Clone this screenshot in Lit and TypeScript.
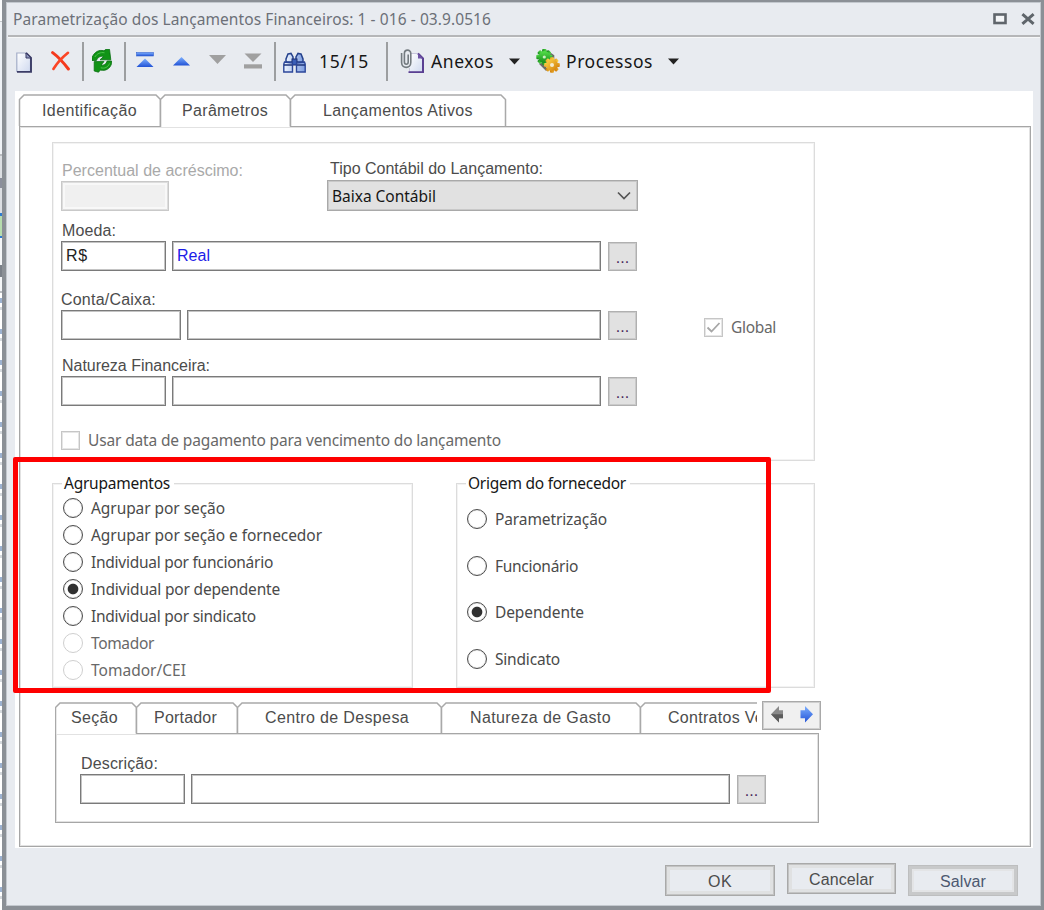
import { LitElement, html, css, svg, nothing } from "lit";
import { customElement, property, query, state } from "lit/decorators.js";
import { classMap } from "lit/directives/class-map.js";

interface Tab {
  text: string;
  textWidth: number;
  width: number;
  offset: number;
}

interface Option {
  text: string;
  width: number;
  disabled?: boolean;
}

@customElement("fit-text")
export class FitText extends LitElement {
  static styles = css`
    :host {
      display: inline-block;
      white-space: pre;
      flex: none;
    }
  `;

  @property() text = "";
  @property({ type: Number }) width = 0;
  @query("span") span!: HTMLSpanElement;

  updated() {
    this.span.style.letterSpacing = "0px";
    const natural = this.span.getBoundingClientRect().width;
    const step = (this.width - natural) / this.text.length;
    this.span.style.letterSpacing = `${step}px`;
  }

  render() {
    return html`<span>${this.text}</span>`;
  }
}

const t = (text: string, width: number) =>
  html`<fit-text .text=${text} .width=${width}></fit-text>`;

@customElement("tab-strip")
export class TabStrip extends LitElement {
  static styles = css`
    :host {
      display: flex;
      position: relative;
      z-index: 1;
    }
    .tab {
      position: relative;
      flex: none;
      box-sizing: border-box;
      height: 100%;
      display: flex;
      align-items: center;
      color: #4c4c4c;
    }
    .shape {
      position: absolute;
      left: 0;
      top: 0;
      overflow: visible;
    }
    .caption {
      position: relative;
      line-height: 20px;
    }
  `;

  @property({ attribute: false }) tabs: Tab[] = [];
  @property({ type: Number }) selected = 0;
  @property({ type: Number }) height = 33;

  shape(width: number, active: boolean) {
    const bottom = active ? this.height : this.height - 1;
    const d = `M.5 ${bottom}V5.5L5 1H${width - 4}L${width + 0.5} 5.5V${bottom}`;
    return html`<svg class="shape" width=${width} height=${this.height}>
      <path d=${d} fill="#fff" stroke="#a9a9a9" stroke-width="1.5" />
    </svg>`;
  }

  render() {
    return this.tabs.map(
      (tab, i) => html`
        <div
          class="tab"
          style="width:${tab.width}px;padding-left:${tab.offset}px"
          @click=${() => (this.selected = i)}
        >
          ${this.shape(tab.width, i === this.selected)}
          <span class="caption">${t(tab.text, tab.textWidth)}</span>
        </div>
      `
    );
  }
}

@customElement("radio-list")
export class RadioList extends LitElement {
  static styles = css`
    :host {
      display: flex;
      flex-direction: column;
      font: 15.5px "Noto Sans", "Open Sans", sans-serif;
      color: #4a4a4a;
    }
    .option {
      flex: 1;
      display: flex;
      align-items: center;
      gap: 8px;
      line-height: 20px;
    }
    .dot {
      box-sizing: border-box;
      width: 20px;
      height: 20px;
      border: 1.5px solid #4d4d4d;
      border-radius: 50%;
      background: #fff;
      box-shadow: inset 0 0 1px #888;
    }
    .dot.on {
      background: radial-gradient(circle, #303030 4.8px, #fff 5.8px);
    }
    .disabled {
      color: #686868;
    }
    .disabled .dot {
      border-color: #cfcfcf;
      box-shadow: none;
    }
  `;

  @property({ attribute: false }) options: Option[] = [];
  @property({ type: Number }) selected = -1;

  choose(i: number) {
    if (!this.options[i].disabled) {
      this.selected = i;
    }
  }

  render() {
    return this.options.map(
      (o, i) => html`
        <div
          class=${classMap({ option: true, disabled: !!o.disabled })}
          @click=${() => this.choose(i)}
        >
          <span class=${classMap({ dot: true, on: i === this.selected })}></span>
          ${t(o.text, o.width)}
        </div>
      `
    );
  }
}

const gradients = svg`
  <defs>
    <linearGradient id="blue" x1="0" y1="0" x2="0" y2="1">
      <stop offset="0" stop-color="#7db0ff" />
      <stop offset="1" stop-color="#2253d6" />
    </linearGradient>
    <linearGradient id="page" x1="0" y1="0" x2="1" y2="1">
      <stop offset="0" stop-color="#ffffff" />
      <stop offset="1" stop-color="#cfd9ef" />
    </linearGradient>
    <linearGradient id="lens" x1="0" y1="0" x2="1" y2="0">
      <stop offset="0" stop-color="#eef5ff" />
      <stop offset="1" stop-color="#7d9de0" />
    </linearGradient>
    <linearGradient id="leaf" x1="0" y1="0" x2="0" y2="1">
      <stop offset="0" stop-color="#55e04a" />
      <stop offset="1" stop-color="#178a1c" />
    </linearGradient>
    <linearGradient id="gold" x1="0" y1="0" x2="1" y2="1">
      <stop offset="0" stop-color="#ffd84a" />
      <stop offset="1" stop-color="#cf7a08" />
    </linearGradient>
  </defs>`;

const icon = (width: number, body: unknown, height = 24) =>
  html`<svg width=${width} height=${height} viewBox="0 0 ${width} ${height}">${gradients}${body}</svg>`;

const teeth = (cx: number, cy: number, r: number, size: number) =>
  [0, 45, 90, 135].map(
    (a) => svg`<rect x=${cx - r} y=${cy - size / 2} width=${r * 2} height=${size} rx="1"
      transform="rotate(${a} ${cx} ${cy})" />`
  );

const icons = {
  page: icon(17, svg`
    <path d="M.8 4H10.5L14.5 8.5V22.5H.8Z" fill="url(#page)" stroke="#a4adc8" stroke-width="1.2" />
    <path d="M10 4L15 9V22.9H1" fill="none" stroke="#3b3c66" stroke-width="1.9" />
    <path d="M10 4V9H15Z" fill="#8b93bb" stroke="#3b3c66" />`),
  remove: icon(19, svg`
    <path d="M1.6 3.6Q9 9 17.4 20" fill="none" stroke="#f43a1d" stroke-width="3" stroke-linecap="round" />
    <path d="M17 3.8Q8 11 2.4 20" fill="none" stroke="#fb4526" stroke-width="2.6" stroke-linecap="round" />`),
  refresh: icon(20, svg`
    <path d="M0 11.5V8.5C2.5 3 6.5.4 12 1.8L14 .3H17.5L18.8 10.8H8L11.6 7.6C8.5 6.8 6 8 4.4 11.5Z" fill="#119316" stroke="#087010" stroke-width=".8" />
    <path d="M19.6 12V14.5C18 19.8 13.5 22.4 8.4 21L6.5 23.2L2.2 22V12.6H12L9 16C12 16.6 14.2 15.3 15.2 12Z" fill="#119316" stroke="#087010" stroke-width=".8" />
    <path d="M2.8 8C5 4.6 8.5 3 12.5 3.8M17.5 14.5C16 18.4 12.5 19.8 8.8 18.8" fill="none" stroke="#4cc44a" />`),
  first: icon(18, svg`
    <rect x=".5" y="3.5" width="17" height="3.5" fill="url(#blue)" stroke="#3765cf" stroke-width=".6" />
    <path d="M9 9.5L17.5 18H.5Z" fill="url(#blue)" />`),
  up: icon(17, svg`<path d="M8.5 8L17 16.5H0Z" fill="url(#blue)" />`),
  down: icon(17, svg`<path d="M0 6H17L8.5 15Z" fill="#a0a0a0" />`),
  last: icon(18, svg`
    <path d="M.5 4.5H17.5L9 13Z" fill="#a0a0a0" />
    <rect y="15.3" width="18" height="4.2" fill="#a0a0a0" />`),
  find: icon(23, svg`
    <path d="M5 5L8 4.4L10 8V13H3V10ZM18 5L15 4.4L13 8V13H20V10Z" fill="url(#lens)" stroke="#24418c" stroke-width="1.5" />
    <rect x="9" y="10" width="5" height="6" fill="#3b5fb8" stroke="#1c2f72" />
    <path d="M1.5 13L9.5 14V23H.8V15ZM21.5 13L13.5 14V23H22.2V15Z" fill="url(#lens)" stroke="#2c479a" stroke-width="1.4" />
    <path d="M1 16H9M14 16H22" stroke="#1f3579" stroke-width="1.5" />`),
  attach: icon(25, svg`
    <path d="M10 4.5H18.5L23 9V23H9.5V19" fill="url(#page)" stroke="#c8c6dc" />
    <path d="M18 4.5L23 9.5V23.2H8.5" fill="none" stroke="#5a3f92" stroke-width="2" />
    <path d="M18 4.5V9.5H23Z" fill="#6d52a4" />
    <path d="M1.6 4V13.5C1.6 20 10.8 20 10.8 13.5V4.5C10.8 0 4.4 0 4.4 4.5V13C4.4 16 8.2 16 8.2 13V5.5" fill="none" stroke="#747b80" stroke-width="1.6" />`),
  gears: icon(25, svg`
    <path d="M10 2L17 7V12M4 14L11 21" fill="none" stroke="#6b6d66" stroke-width="2.6" />
    <g fill="url(#leaf)">${teeth(8.3, 8, 8, 4.4)}<circle cx="8.3" cy="8" r="6" /></g>
    <circle cx="8.3" cy="8" r="1.6" fill="#c9efbf" />
    <g fill="url(#gold)">${teeth(16, 16, 7.8, 4)}<circle cx="16" cy="16" r="6" /></g>
    <circle cx="16" cy="16" r="2" fill="#f4ecd0" />`),
  drop: icon(11, svg`<path d="M0 9.5H11L5.5 15.5Z" fill="#222" />`),
  restore: icon(14, svg`<rect x="1.5" y="1.5" width="11" height="8.5" fill="#f4f6f8" stroke="#5f656b" stroke-width="2.6" />`, 12),
  close: icon(14, svg`<path d="M1.4 1.2L12.6 10.8M12.6 1.2L1.4 10.8" stroke="#5f656b" stroke-width="3" />`, 12),
  chevron: icon(14, svg`<path d="M1 1.5L7 7.5L13 1.5" fill="none" stroke="#555" stroke-width="1.7" />`, 9),
  tick: icon(19, svg`<path d="M3.5 9.5L7.5 13.5L15.5 5" fill="none" stroke="#a6a6a6" stroke-width="1.8" />`, 19),
  prev: icon(13, svg`<path d="M0 8.2L8 0V4.2H12V12.2H8V16.5Z" fill="#8a8a8a" /><path d="M0 8.2H12V12.2H8V16.5Z" fill="#5c5c5c" />`, 17),
  next: icon(13, svg`<path d="M13 8.2L5 0V4.2H.5V12.2H5V16.5Z" fill="url(#blue)" />`, 17),
};

@customElement("app-root")
export class AppRoot extends LitElement {
  static styles = css`
    :host {
      display: block;
      position: relative;
      box-sizing: border-box;
      width: 1044px;
      height: 910px;
      padding-left: 2px;
      overflow: hidden;
      font: 16px "Liberation Sans", Arial, sans-serif;
      color: #4c4c4c;
      background:
        linear-gradient(#fafbfc 0 21px, #c4c7ca 21px 22px, #eff2f6 22px 154px, #b9bcc0 154px 156px, #dcdfe3 156px 178px, #8b8f9c 178px 188px, #dcdfe3 188px 213px, #2d7bd0 213px 216px, #b6dcae 216px 236px, #2d7bd0 236px 238px, #f4f6f8 238px 265px, #7a8088 265px 277px, #f4f6f8 277px 291px, #b9bcc0 291px 293px, transparent 293px) no-repeat,
        repeating-linear-gradient(#fff 0 19px, #9db2d0 19px 24px, #fff 24px 28px, #d5d9dd 28px 31px);
    }
    svg {
      display: block;
      flex: none;
    }
    .window {
      box-sizing: border-box;
      height: 910px;
      border: solid #8b9096;
      border-width: 2px 3px 4px 4px;
      background: #e8ebf0;
      box-shadow: inset 0 0 0 1px #c3c8ce;
    }
    .ui {
      font-family: "Noto Sans", "Open Sans", sans-serif;
    }
    .title {
      display: flex;
      align-items: center;
      height: 33px;
      margin: 0 1px 0 2px;
      padding: 0 5px;
      border-bottom: 2px solid #b5b6b8;
      box-shadow: 0 1px #f6f7f8;
      font-size: 15.5px;
      line-height: 20px;
      color: #6c7078;
    }
    .controls {
      display: flex;
      gap: 14px;
      margin-left: auto;
    }
    .toolbar {
      display: grid;
      grid-template-columns: 35px 31px 10px 32px 12px 37px 36px 35px 30px 9px 36px 67px 14px 31px 78px 27px 30px 102px 11px;
      align-items: center;
      height: 46px;
      margin-top: 1px;
      padding-left: 10px;
      font-size: 17.5px;
      line-height: 24px;
      color: #161616;
    }
    .separator {
      width: 1.5px;
      height: 39px;
      background: #9c9ea0;
    }
    .workspace {
      box-sizing: border-box;
      width: 1018px;
      height: 757px;
      margin: 7px 0 0 9px;
      padding: 3px 3px 3px 4px;
      background: #fff;
    }
    .main-tabs {
      height: 33px;
      margin-bottom: -1px;
    }
    .panel {
      box-sizing: border-box;
      border: 1px solid #a6a6a6;
      box-shadow: inset 0 0 0 1px #e2e2e2;
    }
    .main-panel {
      width: 1012px;
      height: 721px;
      padding: 15px 0 0 32px;
    }
    .group {
      box-sizing: border-box;
      border: 1px solid #dcdcdc;
      box-shadow: inset 0 0 0 1px #f3f3f3;
    }
    .details {
      width: 763px;
      height: 319px;
      padding: 17px 0 0 8px;
    }
    .caption {
      height: 21px;
      line-height: 22px;
      padding-left: 1px;
    }
    .cash .caption {
      padding-left: 0;
    }
    .caption.muted {
      color: #a9a9a9;
    }
    .top {
      display: grid;
      grid-template-columns: 266px 311px;
    }
    .type .caption {
      height: 20px;
      line-height: 18px;
      padding-left: 3px;
    }
    .line {
      display: flex;
      align-items: flex-end;
    }
    .box {
      box-sizing: border-box;
      height: 30px;
      margin-right: 6px;
      padding-left: 4px;
      border: 1px solid #7a7a7a;
      box-shadow: inset 0 0 0 1px #c4c4c4;
      background: #fff;
      line-height: 28px;
      color: #222;
    }
    .code {
      width: 105px;
    }
    .account {
      width: 120px;
    }
    .name {
      width: 429px;
      color: #1c1ce8;
    }
    .account + .name {
      width: 414px;
    }
    .description {
      width: 539px;
    }
    .box.locked {
      width: 108px;
      border-color: #c9c9c9;
      background: #f0f0f0;
      box-shadow: inset 0 0 0 1px #ddd, inset 0 0 0 3px #f8f8f8;
    }
    .select {
      display: flex;
      box-sizing: border-box;
      align-items: center;
      justify-content: space-between;
      height: 31px;
      padding: 0 6px 0 4px;
      border: 1px solid #a9a9a9;
      box-shadow: inset 0 0 0 1px #c8c8c8;
      background: #e1e1e1;
      font-size: 15.5px;
      line-height: 20px;
      color: #161616;
    }
    .more {
      box-sizing: border-box;
      width: 29px;
      height: 29px;
      margin-left: 1px;
      border: 1px solid #b0b0b0;
      box-shadow: inset 0 0 0 1px #cacaca;
      background: #e1e1e1;
      text-align: center;
      line-height: 30px;
      color: #4a2c5c;
    }
    .currency {
      margin-top: 9px;
    }
    .cash {
      margin-top: 18px;
    }
    .nature {
      margin-top: 15px;
    }
    .check {
      display: flex;
      align-items: center;
      gap: 8px;
      font-size: 15.5px;
      line-height: 20px;
      color: #686868;
    }
    .use-date {
      margin-top: 24px;
    }
    .global {
      margin: 0 0 3px 67px;
    }
    .tick {
      box-sizing: border-box;
      width: 19px;
      height: 19px;
      border: 1px solid #c6c6c6;
      box-shadow: inset 0 0 0 1px #e6e6e6;
    }
    .tick svg {
      margin: -1px;
    }
    .groups {
      display: grid;
      grid-template-columns: 361px 359px;
      gap: 43px;
      margin-top: 22px;
    }
    .groups .group {
      height: 205px;
      padding-left: 10px;
    }
    .legend {
      display: block;
      width: fit-content;
      height: 20px;
      margin: -11px 0 0 -1px;
      padding: 0 4px 0 2px;
      background: #fff;
      font-size: 15.5px;
      line-height: 20px;
      color: #161616;
    }
    .grouping {
      height: 189px;
      margin-top: 1px;
    }
    .origin {
      height: 186px;
      margin-top: 3px;
    }
    .sub {
      display: flex;
      align-items: flex-start;
      gap: 5px;
      margin: 13px 0 -1px 3px;
    }
    .sub-tabs {
      width: 702px;
      height: 32px;
      margin-top: 1px;
      overflow: hidden;
    }
    .scroller {
      display: flex;
      box-sizing: border-box;
      width: 59px;
      height: 29px;
      padding: 4px 7px 0 8px;
      justify-content: space-between;
      border: 1px solid #a9a9a9;
      box-shadow: inset 0 0 0 1px #cfcfcf;
      background: #f0f0f0;
    }
    .sub-panel {
      width: 764px;
      height: 90px;
      margin-left: 3px;
      padding: 19px 0 0 24px;
    }
    .footer {
      display: flex;
      align-items: flex-start;
      gap: 12px;
      margin: 15px 0 0 659px;
    }
    .button {
      box-sizing: border-box;
      width: 110px;
      height: 31px;
      margin-top: 2px;
      border: 1px solid #a9a9a9;
      box-shadow: inset 0 0 0 1px #c3c3c3, inset 0 0 0 4px #e0e1e2;
      text-align: center;
      line-height: 31px;
    }
    .button.raised {
      width: 109px;
      margin-top: 0;
    }
    .button.default {
      border-color: #bdbebf;
      box-shadow: inset 0 0 0 3px #c8c9ca, inset 0 0 0 5px #e3e4e6;
      color: #4c5870;
    }
    .highlight {
      position: absolute;
      left: 13px;
      top: 457px;
      z-index: 2;
      box-sizing: border-box;
      width: 758px;
      height: 236px;
      border: 5px solid #fe0000;
      border-radius: 2px;
      pointer-events: none;
    }
  `;

  @state() global = true;

  mainTabs: Tab[] = [
    { text: "Identificação", textWidth: 95, width: 141, offset: 23 },
    { text: "Parâmetros", textWidth: 86, width: 130, offset: 22 },
    { text: "Lançamentos Ativos", textWidth: 150, width: 215, offset: 33 },
  ];

  subTabs: Tab[] = [
    { text: "Seção", textWidth: 47, width: 81, offset: 16 },
    { text: "Portador", textWidth: 63, width: 101, offset: 18 },
    { text: "Centro de Despesa", textWidth: 144, width: 204, offset: 28 },
    { text: "Natureza de Gasto", textWidth: 141, width: 199, offset: 29 },
    { text: "Contratos Ve", textWidth: 96, width: 190, offset: 28 },
  ];

  groupings: Option[] = [
    { text: "Agrupar por seção", width: 134 },
    { text: "Agrupar por seção e fornecedor", width: 231 },
    { text: "Individual por funcionário", width: 182 },
    { text: "Individual por dependente", width: 189 },
    { text: "Individual por sindicato", width: 165 },
    { text: "Tomador", width: 63, disabled: true },
    { text: "Tomador/CEI", width: 95, disabled: true },
  ];

  origins: Option[] = [
    { text: "Parametrização", width: 112 },
    { text: "Funcionário", width: 83 },
    { text: "Dependente", width: 89 },
    { text: "Sindicato", width: 65 },
  ];

  renderToolbar() {
    const separator = html`<span class="separator"></span>`;
    return html`
      <div class="toolbar ui">
        ${icons.page} ${icons.remove} ${separator} ${icons.refresh} ${separator}
        ${icons.first} ${icons.up} ${icons.down} ${icons.last} ${separator}
        ${icons.find} ${t("15/15", 50)} ${separator}
        ${icons.attach} ${t("Anexos", 63)} ${icons.drop}
        ${icons.gears} ${t("Processos", 87)} ${icons.drop}
      </div>
    `;
  }

  renderDetails() {
    return html`
      <div class="group details">
        <div class="top">
          <div>
            <div class="caption muted">${t("Percentual de acréscimo:", 181)}</div>
            <div class="box locked"></div>
          </div>
          <div class="type">
            <div class="caption">${t("Tipo Contábil do Lançamento:", 213)}</div>
            <div class="select ui">${t("Baixa Contábil", 104)} ${icons.chevron}</div>
          </div>
        </div>
        <div class="currency">
          <div class="caption">${t("Moeda:", 54)}</div>
          <div class="line">
            <div class="box code">${t("R$", 22)}</div>
            <div class="box name">${t("Real", 33)}</div>
            <div class="more">...</div>
          </div>
        </div>
        <div class="cash">
          <div class="caption">${t("Conta/Caixa:", 95)}</div>
          <div class="line">
            <div class="box account"></div>
            <div class="box name"></div>
            <div class="more">...</div>
            <div class="check global ui">
              <span class="tick">${this.global ? icons.tick : nothing}</span>
              ${t("Global", 45)}
            </div>
          </div>
        </div>
        <div class="nature">
          <div class="caption">${t("Natureza Financeira:", 148)}</div>
          <div class="line">
            <div class="box code"></div>
            <div class="box name"></div>
            <div class="more">...</div>
          </div>
        </div>
        <div class="check use-date ui">
          <span class="tick"></span>
          ${t("Usar data de pagamento para vencimento do lançamento", 413)}
        </div>
      </div>
    `;
  }

  renderGroups() {
    return html`
      <div class="groups">
        <div class="group">
          <span class="legend ui">${t("Agrupamentos", 106)}</span>
          <radio-list class="grouping" .options=${this.groupings} .selected=${3}></radio-list>
        </div>
        <div class="group">
          <span class="legend ui">${t("Origem do fornecedor", 158)}</span>
          <radio-list class="origin" .options=${this.origins} .selected=${2}></radio-list>
        </div>
      </div>
    `;
  }

  renderSections() {
    return html`
      <div class="sub">
        <tab-strip class="sub-tabs" .tabs=${this.subTabs} .height=${32}></tab-strip>
        <div class="scroller">${icons.prev} ${icons.next}</div>
      </div>
      <div class="panel sub-panel">
        <div class="caption">${t("Descrição:", 77)}</div>
        <div class="line">
          <div class="box code"></div>
          <div class="box description"></div>
          <div class="more">...</div>
        </div>
      </div>
    `;
  }

  render() {
    return html`
      <div class="window">
        <div class="title ui">
          ${t("Parametrização dos Lançamentos Financeiros: 1 - 016 - 03.9.0516", 478)}
          <div class="controls">${icons.restore} ${icons.close}</div>
        </div>
        ${this.renderToolbar()}
        <div class="workspace">
          <tab-strip class="main-tabs" .tabs=${this.mainTabs} .selected=${1}></tab-strip>
          <div class="panel main-panel">
            ${this.renderDetails()} ${this.renderGroups()} ${this.renderSections()}
          </div>
        </div>
        <div class="footer">
          <div class="button">${t("OK", 24)}</div>
          <div class="button raised">${t("Cancelar", 65)}</div>
          <div class="button default">${t("Salvar", 46)}</div>
        </div>
      </div>
      <div class="highlight"></div>
    `;
  }
}
